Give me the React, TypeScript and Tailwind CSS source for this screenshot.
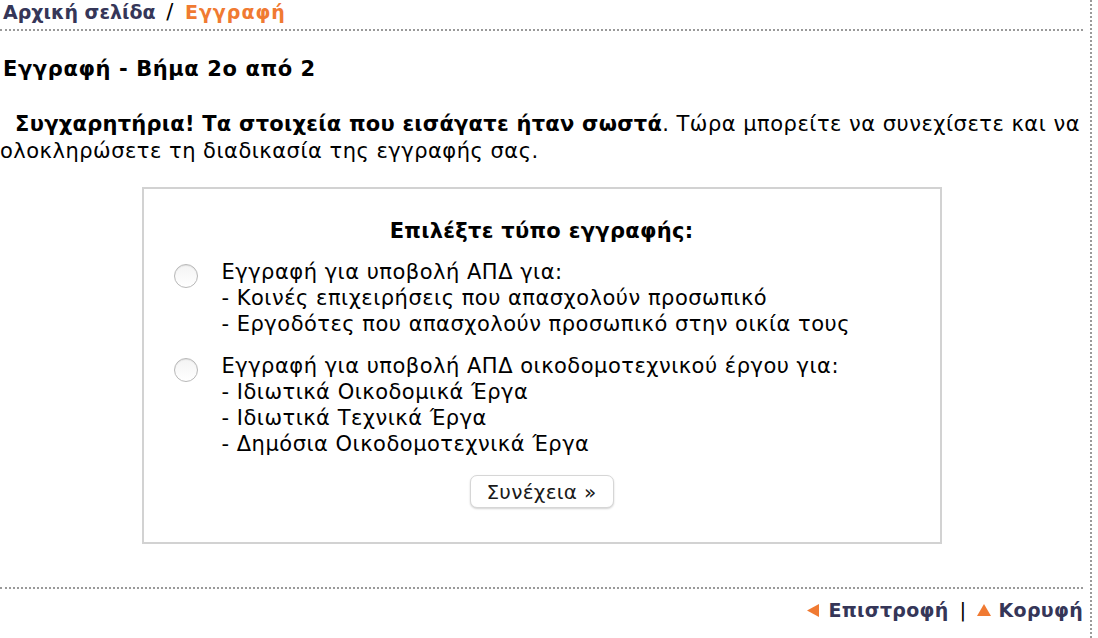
import React from "react";

const font = { fontFamily: '"DejaVu Sans", Verdana, sans-serif' };

export default function App() {
  return (
    <div className="w-[1098px] h-[638px] bg-white overflow-hidden" style={font}>
      <div className="w-[1092px] min-h-[638px] border-r-2 border-dotted border-[#9a9a9a] pr-[7px] text-black">
        {/* breadcrumb */}
        <div className="pl-[3px] pt-[1px] h-[31px] text-[19px] leading-[22px] border-b-2 border-dotted border-[#9a9a9a] whitespace-nowrap">
          <span className="font-bold text-[#353658]">Αρχική σελίδα</span>
          <span className="text-[21px] tracking-[1px] mx-[3px]"> / </span>
          <span className="font-bold text-[#f07a32] tracking-[1px]">Εγγραφή</span>
        </div>

        <h1 className="pl-[3px] mt-[25px] text-[21px] leading-[26px] font-bold tracking-[0.6px] whitespace-nowrap">Εγγραφή - Βήμα 2ο από 2</h1>

        <p className="mt-[29px] text-[21px] leading-[27px] tracking-[0.5px]">
          <span className="whitespace-nowrap">
            <span className="font-bold tracking-[0.25px]">&nbsp;&nbsp;Συγχαρητήρια! Τα στοιχεία που εισάγατε ήταν σωστά</span>. Τώρα μπορείτε να συνεχίσετε και να
          </span>
          <br />
          ολοκληρώσετε τη διαδικασία της εγγραφής σας.
        </p>

        <div className="mx-auto mt-[22px] w-[800px] h-[357px] border-2 border-[#d2d2d2] flex flex-col items-center">
          <div className="mt-[29px] text-[21px] leading-[26px] font-bold tracking-[0.3px] whitespace-nowrap">Επιλέξτε τύπο εγγραφής:</div>

          <div className="self-stretch mt-[16px] pl-[30px] flex flex-col gap-[17px] text-[21px] leading-[26px] tracking-[0.5px] whitespace-nowrap">
            <label className="flex items-start">
              <span className="mt-[4px] w-[24px] h-[24px] rounded-full border border-[#b8b8b8] bg-gradient-to-b from-[#f4f4f4] to-white shadow-[inset_0_1px_1px_rgba(0,0,0,0.08)] shrink-0" />
              <span className="ml-[24px] -mt-[1px]">
                Εγγραφή για υποβολή ΑΠΔ για:<br />
                - Κοινές επιχειρήσεις που απασχολούν προσωπικό<br />
                - Εργοδότες που απασχολούν προσωπικό στην οικία τους
              </span>
            </label>
            <label className="flex items-start">
              <span className="mt-[4px] w-[24px] h-[24px] rounded-full border border-[#b8b8b8] bg-gradient-to-b from-[#f4f4f4] to-white shadow-[inset_0_1px_1px_rgba(0,0,0,0.08)] shrink-0" />
              <span className="ml-[24px] -mt-[1px]">
                Εγγραφή για υποβολή ΑΠΔ οικοδομοτεχνικού έργου για:<br />
                - Ιδιωτικά Οικοδομικά Έργα<br />
                - Ιδιωτικά Τεχνικά Έργα<br />
                - Δημόσια Οικοδομοτεχνικά Έργα
              </span>
            </label>
          </div>

          <button className="mt-[18px] w-[144px] h-[33px] rounded-[7px] border border-[#d6d6d6] bg-white shadow-[0_1px_2px_rgba(0,0,0,0.18)] text-[20px] tracking-[0.3px] text-[#1a1a1a] whitespace-nowrap">
            Συνέχεια »
          </button>
        </div>

        <div className="mt-[43px] border-t-2 border-dotted border-[#9a9a9a]" />
        <div className="mt-[9px] flex justify-end items-center text-[19px] leading-[24px] font-bold tracking-[0.3px] text-[#353658] whitespace-nowrap">
          <svg width="12" height="13" viewBox="0 0 12 13" className="mr-[9px]">
            <polygon points="12,0 12,13 0,6.5" fill="#f07a32" />
          </svg>
          <span>Επιστροφή</span>
          <span className="ml-[11px] mr-[10px] font-normal text-black text-[20px]">|</span>
          <svg width="14" height="12" viewBox="0 0 14 12" className="mr-[8px]">
            <polygon points="7,0 14,12 0,12" fill="#f07a32" />
          </svg>
          <span>Κορυφή</span>
        </div>
      </div>
    </div>
  );
}
